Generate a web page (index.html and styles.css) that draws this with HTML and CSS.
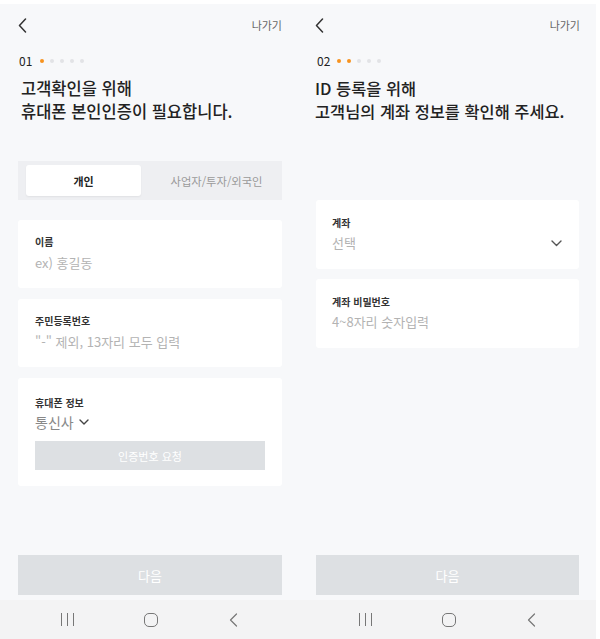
FILE: index.html
```html
<!DOCTYPE html>
<html lang="ko">
<head>
<meta charset="utf-8">
<title>본인인증</title>
<link rel="stylesheet" href="styles.css">
</head>
<body>
<div class="pair">
  <section class="screen screen-a">
    <header class="topbar">
      <svg class="back" width="9" height="15" viewBox="0 0 9 15"><path d="M7.5 1 L1.5 7.5 L7.5 14" fill="none" stroke="#333" stroke-width="1.5" stroke-linecap="round" stroke-linejoin="round"/></svg>
      <span class="exit">나가기</span>
    </header>
    <div class="step"><span class="num">01</span><span class="dots"><i class="on"></i><i></i><i></i><i></i><i></i></span></div>
    <h1 class="title">고객확인을 위해<br>휴대폰 본인인증이 필요합니다.</h1>
    <div class="segment">
      <div class="tab active">개인</div>
      <div class="tab">사업자/투자/외국인</div>
    </div>
    <div class="card">
      <div class="label">이름</div>
      <div class="ph">ex) 홍길동</div>
    </div>
    <div class="card">
      <div class="label">주민등록번호</div>
      <div class="ph">"-" 제외, 13자리 모두 입력</div>
    </div>
    <div class="card card-phone">
      <div class="label">휴대폰 정보</div>
      <div class="carrier">통신사
        <svg width="10" height="6" viewBox="0 0 10 6"><path d="M1 1 L5 5 L9 1" fill="none" stroke="#444" stroke-width="1.4" stroke-linecap="round" stroke-linejoin="round"/></svg>
      </div>
      <div class="req">인증번호 요청</div>
    </div>
    <div class="next">다음</div>
    <nav class="navbar">
      <span class="nav-cell"><span class="recent"><i></i><i></i><i></i></span></span>
      <span class="nav-cell"><span class="home"></span></span>
      <span class="nav-cell"><svg width="9" height="14" viewBox="0 0 9 14"><path d="M7.5 1 L1.5 7 L7.5 13" fill="none" stroke="#777" stroke-width="1.2" stroke-linecap="round" stroke-linejoin="round"/></svg></span>
    </nav>
  </section>

  <section class="screen screen-b">
    <header class="topbar">
      <svg class="back" width="9" height="15" viewBox="0 0 9 15"><path d="M7.5 1 L1.5 7.5 L7.5 14" fill="none" stroke="#333" stroke-width="1.5" stroke-linecap="round" stroke-linejoin="round"/></svg>
      <span class="exit">나가기</span>
    </header>
    <div class="step"><span class="num">02</span><span class="dots"><i class="on"></i><i class="on"></i><i></i><i></i><i></i></span></div>
    <h1 class="title">ID 등록을 위해<br>고객님의 계좌 정보를 확인해 주세요.</h1>
    <div class="card card-r first">
      <div class="label">계좌</div>
      <div class="select">
        <span class="ph">선택</span>
        <svg width="11" height="7" viewBox="0 0 11 7"><path d="M1 1 L5.5 5.5 L10 1" fill="none" stroke="#555" stroke-width="1.4" stroke-linecap="round" stroke-linejoin="round"/></svg>
      </div>
    </div>
    <div class="card card-r">
      <div class="label">계좌 비밀번호</div>
      <div class="ph">4~8자리 숫자입력</div>
    </div>
    <div class="next">다음</div>
    <nav class="navbar">
      <span class="nav-cell"><span class="recent"><i></i><i></i><i></i></span></span>
      <span class="nav-cell"><span class="home"></span></span>
      <span class="nav-cell"><svg width="9" height="14" viewBox="0 0 9 14"><path d="M7.5 1 L1.5 7 L7.5 13" fill="none" stroke="#777" stroke-width="1.2" stroke-linecap="round" stroke-linejoin="round"/></svg></span>
    </nav>
  </section>
</div>
</body>
</html>
```

FILE: styles.css
```css
* { box-sizing: border-box; }
html, body { margin: 0; padding: 0; }
body {
  background: #ffffff;
  font-family: "Noto Sans CJK KR", "Noto Sans", sans-serif;
  color: #222;
  width: 600px;
  height: 639px;
  overflow: hidden;
}
.pair {
  display: flex;
  padding-top: 4px;
}
.screen {
  width: 298px;
  height: 635px;
  background: #f7f8fa;
  display: flex;
  flex-direction: column;
}
.topbar {
  height: 42px;
  display: flex;
  align-items: center;
  justify-content: space-between;
  padding: 0 16px 0 18px;
}
.screen-b .topbar { padding-left: 17px; }
.back { display: block; }
.exit {
  font-size: 11px;
  color: #666;
  line-height: 14px;
}
.step {
  margin-top: 7px;
  height: 16px;
  display: flex;
  align-items: center;
  padding-left: 19px;
}
.num {
  font-size: 12px;
  line-height: 16px;
  color: #222;
}
.dots {
  display: flex;
  gap: 6px;
  margin-left: 8px;
}
.screen-b .dots { margin-left: 7px; }
.dots i {
  width: 4px;
  height: 4px;
  border-radius: 50%;
  background: #e2e3e6;
}
.dots i.on { background: #f7931e; }
.title {
  margin: 8px 0 0;
  padding-left: 21px;
  font-size: 16.5px;
  line-height: 23px;
  font-weight: 500;
  color: #222;
  white-space: nowrap;
}
.screen-b .title {
  padding-left: 17px;
  font-size: 16.4px;
}
.segment {
  margin: 38px 16px 0 18px;
  height: 39px;
  background: #eeeff2;
  padding: 4px 8px;
  display: grid;
  grid-template-columns: 1fr 1fr;
  gap: 18px;
}
.tab {
  display: flex;
  align-items: center;
  justify-content: center;
  font-size: 11.3px;
  color: #9a9a9a;
}
.tab.active {
  background: #fff;
  color: #222;
  font-weight: 700;
  font-size: 11px;
  border-radius: 3px;
  box-shadow: 0 1px 2px rgba(0,0,0,0.06);
}
.card {
  margin: 11px 16px 0 18px;
  background: #fff;
  border-radius: 3px;
  padding: 15px 17px;
}
.segment + .card { margin-top: 20px; }
.label {
  font-size: 10px;
  line-height: 14px;
  font-weight: 700;
  color: #333;
}
.ph {
  margin-top: 4px;
  font-size: 13px;
  line-height: 20px;
  color: #b3b3b3;
}
.card-phone { padding: 18px 17px 16px; }
.carrier {
  margin-top: 2px;
  font-size: 14px;
  line-height: 20px;
  color: #888;
  display: flex;
  align-items: center;
  gap: 5px;
}
.req {
  margin-top: 9px;
  height: 29px;
  background: #dde0e3;
  color: #fff;
  font-size: 11px;
  display: flex;
  align-items: center;
  justify-content: center;
}
.card-r {
  margin: 10px 17px 0 18px;
  padding: 16px 17px 16px 16px;
}
.card-r.first { margin-top: 77px; }
.card-r .ph { margin-top: 3px; }
.select {
  display: flex;
  align-items: center;
  justify-content: space-between;
}
.select .ph { margin-top: 3px; }
.select svg { margin-top: 3px; }
.next {
  margin: auto 16px 5px 18px;
  height: 40px;
  background: #dde0e3;
  color: #fff;
  font-size: 13px;
  display: flex;
  align-items: center;
  justify-content: center;
}
.screen-b .next { margin-right: 17px; }
.navbar {
  height: 39px;
  background: #f3f3f4;
  display: grid;
  grid-template-columns: 83px 83px 83px;
  padding-left: 26px;
  align-items: center;
}
.nav-cell {
  display: flex;
  justify-content: center;
  align-items: center;
}
.recent {
  display: flex;
  gap: 5px;
}
.recent i {
  width: 1px;
  height: 13px;
  background: #777;
}
.home {
  width: 14px;
  height: 14px;
  border: 1.2px solid #777;
  border-radius: 5px;
}
```
